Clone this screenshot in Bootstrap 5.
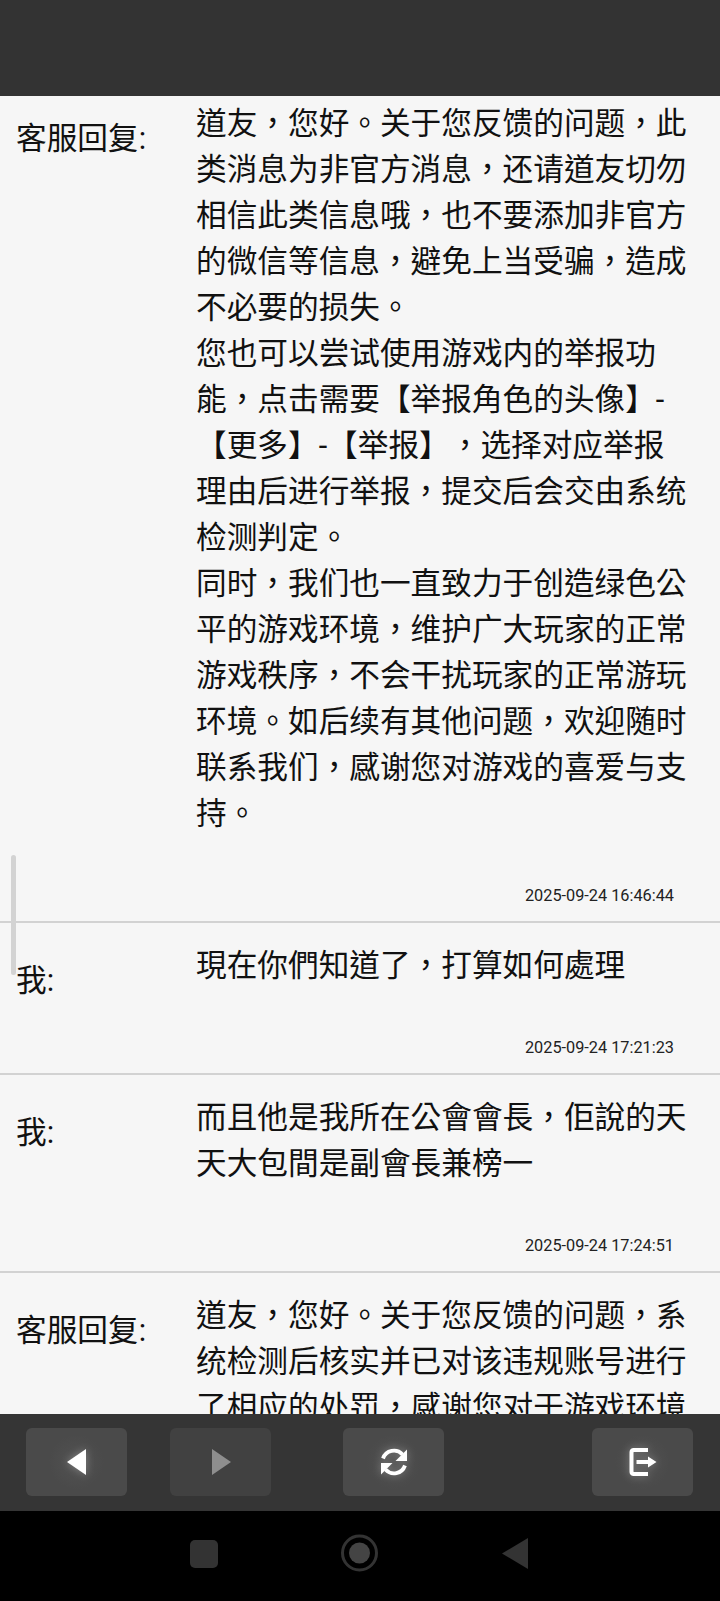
<!DOCTYPE html>
<html lang="zh-Hant">
<head>
<meta charset="utf-8">
<link href="https://cdn.jsdelivr.net/npm/bootstrap@5.3.0/dist/css/bootstrap.min.css" rel="stylesheet">
<style>
html,body{height:100%;margin:0;overflow:hidden;background:#000;}
body{font-family:"Roboto","Noto Sans CJK TC",sans-serif;color:#111;text-spacing-trim:space-all;}
.app-shell{height:1601px;}
.top-strip{height:96px;background:#333;flex:none;}
.feed{height:1318px;background:#f6f6f6;overflow:hidden;position:relative;flex:none;}
.feed-inner{margin-top:-15px;}
.msg-row{border-bottom:2px solid #d2d2d2;padding:20px 30px 0 16px;}
.msg-label{width:180px;flex:none;font-size:30.67px;line-height:46px;padding-top:15px;}
.msg-text{font-size:30.67px;line-height:46px;width:494px;flex:none;padding-bottom:16px;}
.msg-time{font-size:16.3px;line-height:22px;text-align:right;padding:32px 16px 14px 0;color:#222;}
.scroll-thumb{position:absolute;left:11px;top:759px;width:5px;height:120px;background:#d3d3d3;border-radius:3px;}
.tool-bar{height:97px;background:#353535;flex:none;padding:14px 27px 15px 26px;}
.tool-btn{width:101px;height:68px;border:0;border-radius:6px;background:radial-gradient(circle,#525252 0,#4a4a4a 45%);padding:0;}
.tool-btn.off{background:#414141;}
.tool-btn svg{filter:drop-shadow(0 0 4px rgba(255,255,255,.3));}
.tool-btn.off svg{filter:none;}
.tool-gap-a{margin-left:43px;}
.tool-gap-b{margin-left:72px;}
.nav-strip{height:90px;background:#000;flex:none;}
</style>
</head>
<body>
<div class="app-shell d-flex flex-column">
  <div class="top-strip"></div>
  <div class="feed">
    <div class="feed-inner">
      <div class="msg-row">
        <div class="d-flex">
          <div class="msg-label">客服回复:</div>
          <div class="msg-text">道友，您好。关于您反馈的问题，此类消息为非官方消息，还请道友切勿相信此类信息哦，也不要添加非官方的微信等信息，避免上当受骗，造成不必要的损失。<br>您也可以尝试使用游戏内的举报功能，点击需要【举报角色的头像】-【更多】-【举报】，选择对应举报理由后进行举报，提交后会交由系统检测判定。<br>同时，我们也一直致力于创造绿色公平的游戏环境，维护广大玩家的正常游戏秩序，不会干扰玩家的正常游玩环境。如后续有其他问题，欢迎随时联系我们，感谢您对游戏的喜爱与支持。</div>
        </div>
        <div class="msg-time">2025-09-24 16:46:44</div>
      </div>
      <div class="msg-row">
        <div class="d-flex">
          <div class="msg-label">我:</div>
          <div class="msg-text">現在你們知道了，打算如何處理</div>
        </div>
        <div class="msg-time">2025-09-24 17:21:23</div>
      </div>
      <div class="msg-row">
        <div class="d-flex">
          <div class="msg-label">我:</div>
          <div class="msg-text">而且他是我所在公會會長，佢說的天天大包間是副會長兼榜一</div>
        </div>
        <div class="msg-time">2025-09-24 17:24:51</div>
      </div>
      <div class="msg-row">
        <div class="d-flex">
          <div class="msg-label">客服回复:</div>
          <div class="msg-text">道友，您好。关于您反馈的问题，系统检测后核实并已对该违规账号进行了相应的处罚，感谢您对于游戏环境</div>
        </div>
      </div>
    </div>
    <div class="scroll-thumb"></div>
  </div>
  <div class="tool-bar d-flex">
    <button class="tool-btn d-flex align-items-center justify-content-center" aria-label="后退">
      <svg width="20" height="26" viewBox="0 0 20 26"><path d="M19 0V26L0 13Z" fill="#fff"/></svg>
    </button>
    <button class="tool-btn off tool-gap-a d-flex align-items-center justify-content-center" aria-label="前进">
      <svg width="20" height="26" viewBox="0 0 20 26"><path d="M1 0V26L20 13Z" fill="#8e8e8e"/></svg>
    </button>
    <button class="tool-btn tool-gap-b d-flex align-items-center justify-content-center" aria-label="刷新">
      <svg width="28" height="28" viewBox="0 0 28 28" fill="none"><path d="M3 10.500A11.600 11.600 0 0 1 22.500 6.500" stroke="#fff" stroke-width="3.800"/><path d="M27 1.500V13H15.500Z" fill="#fff"/><path d="M25 17.500A11.600 11.600 0 0 1 5.500 21.500" stroke="#fff" stroke-width="3.800"/><path d="M1 26.500V15H12.500Z" fill="#fff"/></svg>
    </button>
    <button class="tool-btn ms-auto d-flex align-items-center justify-content-center" aria-label="退出">
      <svg width="28" height="28" viewBox="0 0 28 28" fill="none"><path d="M19 2H4.500A2.500 2.500 0 0 0 2.500 4.500V23.500A2.500 2.500 0 0 0 4.500 26H19" stroke="#fff" stroke-width="4"/><path d="M7.500 12H19V8.500L27.500 14L19 19.500V16H7.500Z" fill="#fff"/></svg>
    </button>
  </div>
  <div class="nav-strip d-flex align-items-center position-relative">
    <svg class="d-block" width="720" height="90" viewBox="0 1511 720 90"><rect x="190" y="1540" width="28" height="28" rx="5" fill="#333"/><circle cx="359.500" cy="1553" r="17" fill="none" stroke="#333" stroke-width="3"/><circle cx="359.500" cy="1553" r="10.500" fill="#444"/><path d="M528 1538V1569L502 1553.500Z" fill="#333"/></svg>
  </div>
</div>
</body>
</html>
